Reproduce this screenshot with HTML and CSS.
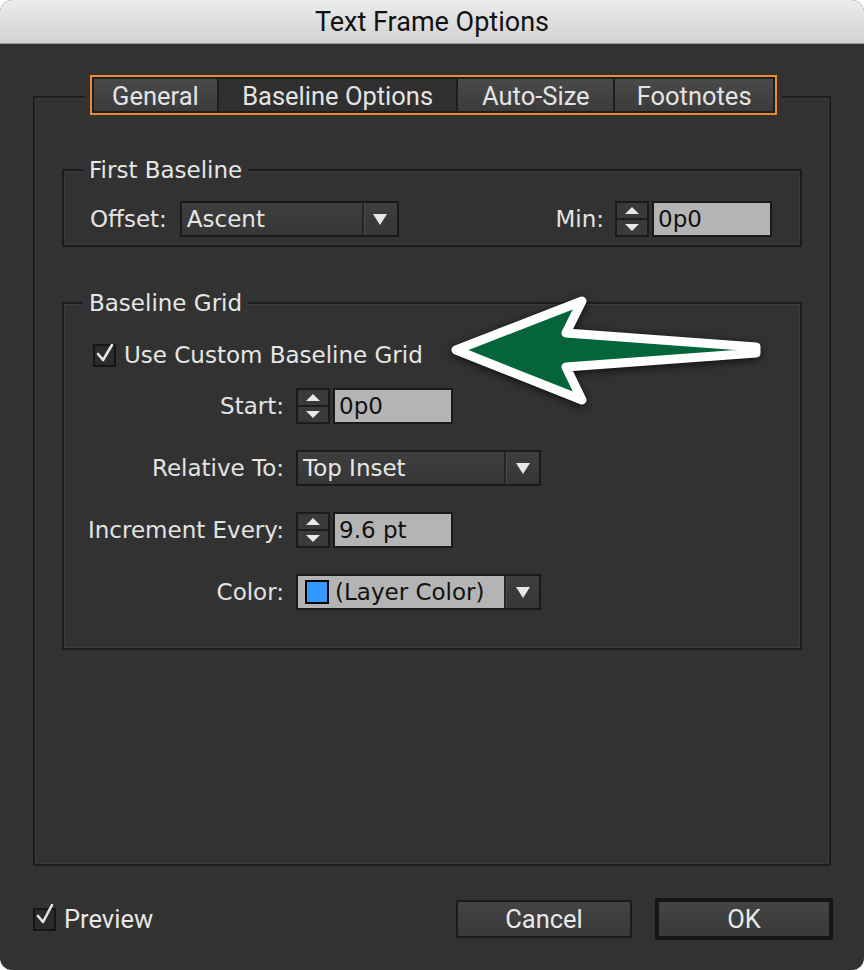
FILE: index.html
```html
<!DOCTYPE html>
<html>
<head>
<meta charset="utf-8">
<link rel="stylesheet" href="styles.css">
</head>
<body>
<div class="dialog">
  <div class="titlebar">Text Frame Options</div>
  <div class="panel">
    <div class="tabs">
      <div class="tab tab-general">General</div>
      <div class="tab tab-baseline active">Baseline Options</div>
      <div class="tab tab-auto">Auto-Size</div>
      <div class="tab tab-foot">Footnotes</div>
    </div>

    <div class="group group-first">
      <div class="group-title">First Baseline</div>
      <div class="fb-row">
        <span class="label">Offset:</span>
        <div class="dropdown dd-offset">
          <span class="dd-text">Ascent</span>
          <span class="dd-btn"><i class="tri-down"></i></span>
        </div>
        <span class="label min-label">Min:</span>
        <div class="spinner"><span class="sp-up"><i class="tri-up"></i></span><span class="sp-down"><i class="tri-down small"></i></span></div>
        <div class="field field-min">0p0</div>
      </div>
    </div>

    <div class="group group-grid">
      <div class="group-title">Baseline Grid</div>
      <div class="check-row">
        <span class="checkbox">
          <svg viewBox="0 0 24 24" width="24" height="24"><polyline points="5,12 10,18 19,3" fill="none" stroke="#e4e4e4" stroke-width="2.6" stroke-linecap="round" stroke-linejoin="round"/></svg>
        </span>
        <span class="check-label">Use Custom Baseline Grid</span>
      </div>
      <div class="form-grid">
        <span class="label r">Start:</span>
        <div class="ctl">
          <div class="spinner"><span class="sp-up"><i class="tri-up"></i></span><span class="sp-down"><i class="tri-down small"></i></span></div>
          <div class="field">0p0</div>
        </div>

        <span class="label r">Relative To:</span>
        <div class="ctl">
          <div class="dropdown dd-wide">
            <span class="dd-text">Top Inset</span>
            <span class="dd-btn"><i class="tri-down"></i></span>
          </div>
        </div>

        <span class="label r">Increment Every:</span>
        <div class="ctl">
          <div class="spinner"><span class="sp-up"><i class="tri-up"></i></span><span class="sp-down"><i class="tri-down small"></i></span></div>
          <div class="field">9.6 pt</div>
        </div>

        <span class="label r">Color:</span>
        <div class="ctl">
          <div class="dropdown dd-wide dd-color">
            <span class="dd-text"><span class="swatch"></span>(Layer Color)</span>
            <span class="dd-btn"><i class="tri-down"></i></span>
          </div>
        </div>
      </div>
    </div>
  </div>

  <div class="footer">
    <span class="checkbox cb-preview">
      <svg viewBox="0 0 24 24" width="24" height="24"><polyline points="5,12 10,18 19,1" fill="none" stroke="#e4e4e4" stroke-width="2.6" stroke-linecap="round" stroke-linejoin="round"/></svg>
    </span>
    <span class="preview-label">Preview</span>
    <span class="spacer"></span>
    <div class="btn btn-cancel">Cancel</div>
    <div class="btn btn-ok">OK</div>
  </div>

  <svg class="arrow" width="350" height="140" viewBox="0 0 350 140">
    <polygon points="26,70 152,21 136,53 326,67 326,73 136,87 152,120" fill="#04643a" stroke="#ffffff" stroke-width="9" stroke-linejoin="round"/>
  </svg>
</div>
</body>
</html>
```

FILE: styles.css
```css
* { box-sizing: border-box; }
html, body { margin: 0; padding: 0; background: #ffffff; }

.dialog {
  position: relative;
  width: 864px;
  height: 970px;
  background: #323232;
  border-radius: 12px;
  overflow: hidden;
  font-family: "DejaVu Sans", "Open Sans", sans-serif;
  color: #e3e3e3;
}

.titlebar {
  height: 44px;
  background: linear-gradient(#ececec, #d2d2d2);
  border-bottom: 1px solid #9c9c9c;
  text-align: center;
  font-family: Roboto, "Liberation Sans", sans-serif;
  font-size: 27px;
  line-height: 44px;
  color: #121212;
}

.panel {
  margin: 52px 33px 0 33px;
  height: 770px;
  border: 2px solid #1d1d1d;
  box-shadow: inset 0 0 0 1px #3a3a3a;
  padding-left: 27px;
}

.tabs {
  display: flex;
  gap: 2px;
  width: 687px;
  height: 40px;
  margin: -23px 0 0 28px;
  padding: 2px;
  border: 2px solid #e98b32;
  background: #1e1e1e;
  box-shadow: 0 0 0 5px #323232;
}
.tab {
  height: 32px;
  background: linear-gradient(#4a4a4a, #3b3b3b);
  color: #e4e4e4;
  font-family: Roboto, "Liberation Sans", sans-serif;
  font-size: 25.5px;
  line-height: 34px;
  text-align: center;
}
.tab.active { background: #2f2f2f; }
.tab-general { width: 123px; }
.tab-baseline { width: 238px; }
.tab-auto { width: 155px; }
.tab-foot { width: 158px; }

.group {
  width: 740px;
  border: 2px solid #1c1c1c;
  box-shadow: inset 0 0 0 1px #3b3b3b;
  padding: 0 28px 0 26px;
}
.group-first { margin-top: 54px; padding-bottom: 8px; }
.group-grid { margin-top: 55px; padding-bottom: 38px; }

.group-title {
  width: fit-content;
  margin: -14px 0 0 -7px;
  padding: 0 6px;
  background: #323232;
  font-size: 23px;
  line-height: 26px;
  color: #e6e6e6;
}

.label { font-size: 23px; line-height: 36px; color: #e3e3e3; white-space: nowrap; }
.label.r { justify-self: end; }

.fb-row {
  display: flex;
  align-items: center;
  margin-top: 18px;
  height: 36px;
}
.dd-offset { margin-left: 13px; width: 219px; }
.min-label { margin-left: auto; margin-right: 11px; }

.dropdown {
  display: flex;
  height: 36px;
  border: 2px solid #1a1a1a;
  background: linear-gradient(#3e3e3e, #363636);
}
.dd-text {
  flex: 1;
  display: flex;
  align-items: center;
  padding-left: 5px;
  font-size: 23px;
  color: #e6e6e6;
  white-space: nowrap;
  border-right: 2px solid #262626;
  box-shadow: 1px 0 0 #4a4a4a;
}
.dd-btn {
  width: 33px;
  display: flex;
  align-items: center;
  justify-content: center;
}
.dd-wide { width: 245px; }
.dd-color .dd-text { background: #b4b4b4; color: #111; padding-left: 7px; }
.swatch {
  width: 24px;
  height: 24px;
  margin-right: 6px;
  background: #3399ff;
  border: 2px solid #000;
}

.tri-down {
  display: block;
  width: 0; height: 0;
  border-left: 7px solid transparent;
  border-right: 7px solid transparent;
  border-top: 11px solid #e8e8e8;
}
.tri-down.small {
  border-left-width: 7px;
  border-right-width: 7px;
  border-top-width: 7px;
}
.tri-up {
  display: block;
  width: 0; height: 0;
  border-left: 7px solid transparent;
  border-right: 7px solid transparent;
  border-bottom: 7px solid #e8e8e8;
}

.spinner {
  width: 34px;
  height: 36px;
  border: 2px solid #1a1a1a;
  background: #3a3a3a;
  display: flex;
  flex-direction: column;
}
.spinner span {
  flex: 1;
  display: flex;
  align-items: center;
  justify-content: center;
}
.sp-up { border-bottom: 2px solid #1e1e1e; }

.field {
  width: 120px;
  height: 36px;
  margin-left: 3px;
  border: 2px solid #1a1a1a;
  background: #b4b4b4;
  color: #111;
  font-size: 23px;
  line-height: 32px;
  padding-left: 4px;
}

.check-row {
  display: flex;
  align-items: center;
  height: 26px;
  margin-top: 26px;
  padding-left: 3px;
}
.checkbox {
  width: 23px;
  height: 23px;
  background: #2b2b2b;
  border: 2px solid #161616;
  position: relative;
  display: inline-block;
}
.checkbox svg { position: absolute; left: -2px; top: -4px; }
.check-label { margin-left: 8px; font-size: 23px; color: #e6e6e6; }

.form-grid {
  display: grid;
  grid-template-columns: 194px auto;
  column-gap: 12px;
  row-gap: 26px;
  margin-top: 20px;
  align-items: center;
}
.ctl { display: flex; height: 36px; }

.footer {
  display: flex;
  align-items: center;
  height: 42px;
  margin-top: 32px;
  padding: 0 31px 0 33px;
}
.cb-preview svg { top: -6px; }
.preview-label {
  margin-left: 8px;
  font-family: Roboto, "Liberation Sans", sans-serif;
  font-size: 25.5px;
  color: #e6e6e6;
}
.spacer { flex: 1; }
.btn {
  display: flex;
  align-items: center;
  justify-content: center;
  font-family: Roboto, "Liberation Sans", sans-serif;
  font-size: 25.5px;
  color: #e8e8e8;
  background: linear-gradient(#444444, #393939);
}
.btn-cancel { width: 176px; height: 38px; border: 2px solid #1b1b1b; }
.btn-ok { width: 178px; height: 42px; margin-left: 23px; border: 4px solid #161616; }

.arrow {
  position: absolute;
  left: 430px;
  top: 280px;
  filter: drop-shadow(0 2px 4px rgba(0, 0, 0, 0.7));
}
```
